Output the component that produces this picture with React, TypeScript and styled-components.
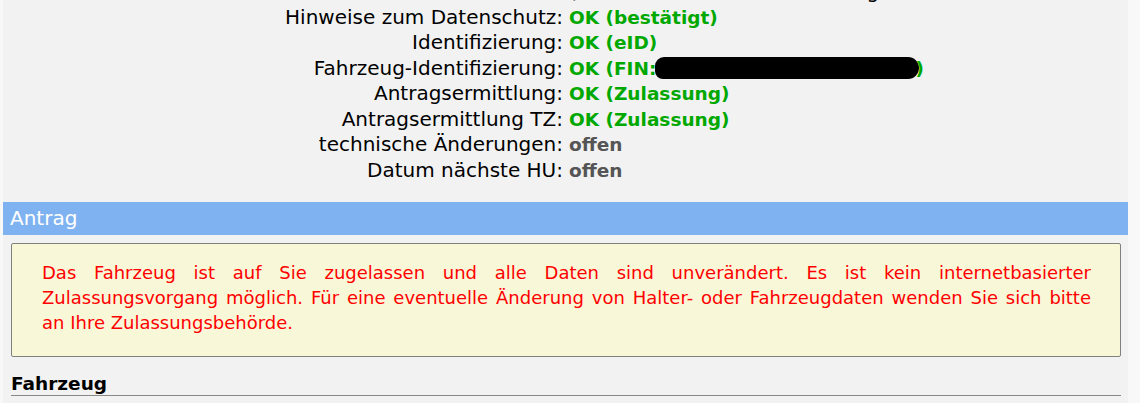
import React from "react";
import styled, { createGlobalStyle } from "styled-components";

const Global = createGlobalStyle`
  html, body { margin: 0; padding: 0; background: #f8f8f8; }
  body { font-family: "DejaVu Sans", sans-serif; overflow: hidden; }
`;

const Page = styled.div`
  margin-left: 3px;
  width: 1125px;
  height: 403px;
  background: #f2f2f2;
  overflow: hidden;
`;

const StatusList = styled.div`
  display: grid;
  grid-template-columns: 560px 1fr;
  column-gap: 6px;
  margin-top: -21px;
  font-size: 20px;
  line-height: 25.5px;
`;

const Label = styled.div`
  text-align: right;
  color: #000;
  white-space: nowrap;
`;

type Tone = "ok" | "open" | "plain";

const Value = styled.div<{ $tone: Tone }>`
  white-space: nowrap;
  font-size: ${(p) => (p.$tone === "plain" ? "20px" : "18.5px")};
  font-weight: ${(p) => (p.$tone === "plain" ? "normal" : "bold")};
  color: ${(p) => (p.$tone === "ok" ? "#00a800" : p.$tone === "open" ? "#555555" : "#000")};
`;

const Redaction = styled.span`
  display: inline-block;
  vertical-align: middle;
  width: 264px;
  height: 22px;
  margin-top: -3px;
  margin-left: -1px;
  margin-right: -4px;
  background: #000;
  border-radius: 9px 11px 11px 8px;
`;

const SectionBar = styled.div`
  margin-top: 19px;
  height: 33px;
  background: #7fb2f1;
  color: #fff;
  font-size: 20px;
  line-height: 33px;
  padding-left: 7px;
`;

const Notice = styled.div`
  margin: 8px 7px 0 8px;
  background: #f8f7d8;
  border: 1px solid #808080;
  border-radius: 2px;
  padding: 16px 29px 21px 30px;
  color: #ff0000;
  font-size: 18px;
  line-height: 25px;
  text-align: justify;
`;

const SubHeading = styled.div`
  margin: 16px 7px 0 8px;
  font-weight: bold;
  font-size: 18.5px;
  line-height: 22px;
  color: #000;
  border-bottom: 1px solid #888;
  padding-bottom: 0;
`;

const rows: { label: string; value: React.ReactNode; tone: Tone }[] = [
  { label: "Halter", value: "(Mustermann, Max, Musterweg 12, 12345 Musterstadt-Nord, Deutschland)", tone: "plain" },
  { label: "Hinweise zum Datenschutz:", value: "OK (bestätigt)", tone: "ok" },
  { label: "Identifizierung:", value: "OK (eID)", tone: "ok" },
  {
    label: "Fahrzeug-Identifizierung:",
    value: (
      <>
        OK (FIN:<Redaction />)
      </>
    ),
    tone: "ok",
  },
  { label: "Antragsermittlung:", value: "OK (Zulassung)", tone: "ok" },
  { label: "Antragsermittlung TZ:", value: "OK (Zulassung)", tone: "ok" },
  { label: "technische Änderungen:", value: "offen", tone: "open" },
  { label: "Datum nächste HU:", value: "offen", tone: "open" },
];

export default function App() {
  return (
    <>
      <Global />
      <Page>
        <StatusList>
          {rows.map((r, i) => (
            <React.Fragment key={i}>
              <Label>{r.label}</Label>
              <Value $tone={r.tone}>{r.value}</Value>
            </React.Fragment>
          ))}
        </StatusList>
        <SectionBar>Antrag</SectionBar>
        <Notice>
          Das Fahrzeug ist auf Sie zugelassen und alle Daten sind unverändert. Es ist kein internetbasierter
          Zulassungsvorgang möglich. Für eine eventuelle Änderung von Halter- oder Fahrzeugdaten wenden Sie sich bitte
          an Ihre Zulassungsbehörde.
        </Notice>
        <SubHeading>Fahrzeug</SubHeading>
      </Page>
    </>
  );
}
